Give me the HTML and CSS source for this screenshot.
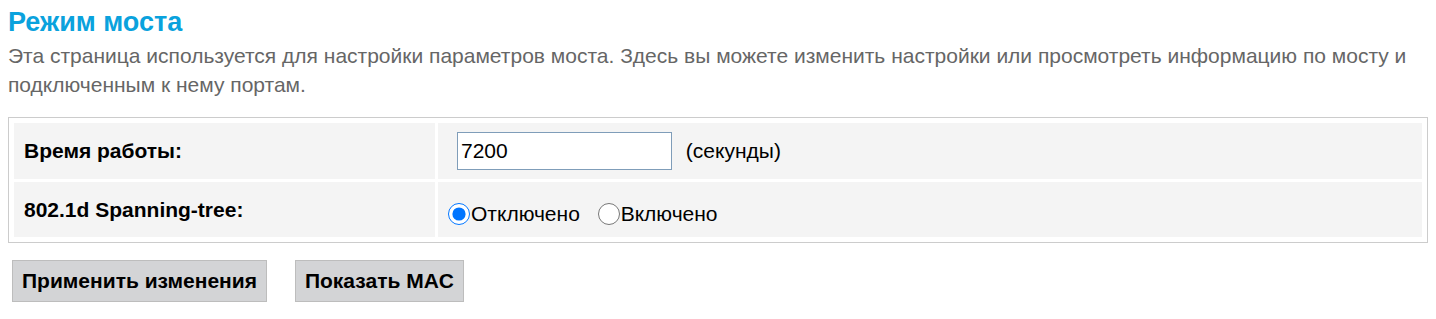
FILE: index.html
```html
<!DOCTYPE html>
<html lang="ru">
<head>
    <meta charset="UTF-8">
    <title>Режим моста</title>
    <link rel="stylesheet" href="styles.css">
</head>
<body>
    <h1 class="page-title">Режим моста</h1>
    <p class="page-intro">Эта страница используется для настройки параметров моста. Здесь вы можете изменить настройки или просмотреть информацию по мосту и подключенным к нему портам.</p>

    <form class="bridge-form">
        <table class="settings">
            <tr>
                <td class="label">Время работы:</td>
                <td class="value">
                    <input type="text" class="text-field" name="ageingTime" value="7200">
                    <span class="unit">(секунды)</span>
                </td>
            </tr>
            <tr>
                <td class="label">802.1d Spanning-tree:</td>
                <td class="value">
                    <label class="radio"><input type="radio" name="stp" value="0" checked>Отключено</label>
                    <label class="radio"><input type="radio" name="stp" value="1">Включено</label>
                </td>
            </tr>
        </table>

        <div class="actions">
            <button type="button" class="btn">Применить изменения</button>
            <button type="button" class="btn">Показать MAC</button>
        </div>
    </form>
</body>
</html>
```

FILE: styles.css
```css
body {
    margin: 8px;
    font-family: 'Liberation Sans', Arial, sans-serif;
    color: #000;
    background-color: #fff;
}
.page-title {
    margin: 0;
    font-size: 27px;
    line-height: 28px;
    color: #0aa2dd;
    font-weight: bold;
}
.page-intro {
    margin: 5px 0 0;
    font-size: 21px;
    line-height: 29px;
    color: #666;
}
.bridge-form {
    margin-top: 18px;
}
.settings {
    width: 100%;
    border: 1px solid #cccccc;
    padding: 2px;
    border-spacing: 3px;
}
.settings td {
    background-color: #f4f4f4;
    padding: 0 10px;
}
.settings tr:first-child td {
    height: 56px;
}
.settings tr:last-child td {
    height: 55px;
}
.label {
    width: 401px;
    font-size: 21px;
    font-weight: bold;
    padding-left: 11px;
}
.value {
    font-size: 21px;
}
.text-field {
    width: 215px;
    height: 38px;
    box-sizing: border-box;
    margin: 0 8px 0 9px;
    padding: 0 3px;
    border: 1px solid #7f9db9;
    font-family: 'Liberation Sans', Arial, sans-serif;
    font-size: 21px;
    vertical-align: middle;
}
.unit {
    vertical-align: middle;
}
.radio {
    margin-right: 12px;
    position: relative;
    top: 4px;
}
.radio input {
    width: 22px;
    height: 22px;
    margin: 0 1px 0 0;
    vertical-align: -4px;
}
.actions {
    display: flex;
    gap: 28px;
    margin-top: 17px;
    padding-left: 4px;
}
.btn {
    height: 42px;
    padding: 0 9px;
    background-color: #d3d4d6;
    border: 1px solid #bdbdbd;
    font-family: 'Liberation Sans', Arial, sans-serif;
    font-size: 21px;
    font-weight: bold;
    color: #000;
    cursor: pointer;
}
```
